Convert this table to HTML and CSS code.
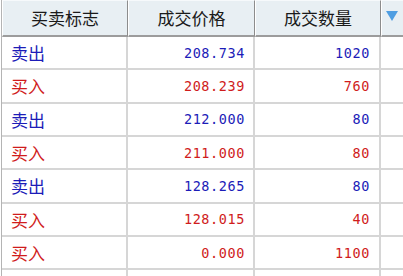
FILE: index.html
```html
<!DOCTYPE html>
<html lang="zh">
<head>
<meta charset="utf-8">
<link rel="stylesheet" href="styles.css">
</head>
<body>
<div class="grid">
  <div class="hd">买卖标志</div>
  <div class="hd">成交价格</div>
  <div class="hd">成交数量</div>
  <div class="hd hd-menu"><svg width="12" height="10" viewBox="0 0 12 10"><polygon points="0,0 12,0 6,10" fill="#4f9ee2"/></svg></div>

  <div class="c flag sell">卖出</div><div class="c num sell">208.734</div><div class="c num qty sell">1020</div><div class="c end"></div>
  <div class="c flag buy">买入</div><div class="c num buy">208.239</div><div class="c num qty buy">760</div><div class="c end"></div>
  <div class="c flag sell">卖出</div><div class="c num sell">212.000</div><div class="c num qty sell">80</div><div class="c end"></div>
  <div class="c flag buy">买入</div><div class="c num buy">211.000</div><div class="c num qty buy">80</div><div class="c end"></div>
  <div class="c flag sell">卖出</div><div class="c num sell">128.265</div><div class="c num qty sell">80</div><div class="c end"></div>
  <div class="c flag buy">买入</div><div class="c num buy">128.015</div><div class="c num qty buy">40</div><div class="c end"></div>
  <div class="c flag buy">买入</div><div class="c num buy">0.000</div><div class="c num qty buy">1100</div><div class="c end"></div>

  <div class="c tail"></div><div class="c tail"></div><div class="c tail"></div><div class="c tail end"></div>
</div>
</body>
</html>
```
FILE: styles.css
```css
html, body {
  margin: 0;
  padding: 0;
  background: #ffffff;
}
body {
  width: 403px;
  height: 276px;
  overflow: hidden;
  font-family: "Noto Sans CJK SC", "Noto Sans", sans-serif;
}
.grid {
  box-sizing: border-box;
  height: 276px;
  display: grid;
  grid-template-columns: 126px 127px 126px 1fr;
  grid-template-rows: 37px repeat(7, 33.33px) 1fr;
  margin-left: 1px;
  border-left: 1px solid #b4b4b4;
}
.hd {
  box-sizing: border-box;
  background: #e8eff3;
  border-top: 1px solid #f6f9fb;
  border-left: 1px solid #ffffff;
  border-right: 1px solid #8c8c8c;
  border-bottom: 2px solid #9c9c9c;
  display: flex;
  align-items: center;
  justify-content: center;
  font-size: 17px;
  color: #1a1a1a;
  padding-bottom: 1px;
}
.hd-menu {
  justify-content: flex-start;
  padding-left: 4px;
  border-right: none;
  padding-bottom: 4px;
}
.c {
  box-sizing: border-box;
  border-right: 2px solid #d6d6d6;
  border-bottom: 2px solid #d6d6d6;
  display: flex;
  align-items: center;
}
.c.end {
  border-right: none;
}
.c.tail {
  border-bottom: none;
}
.flag {
  font-size: 17px;
  padding-left: 9px;
}
.num {
  justify-content: flex-end;
  font-family: "DejaVu Sans Mono", "Liberation Mono", monospace;
  font-size: 13.5px;
  letter-spacing: 0.6px;
  padding-right: 8px;
}
.qty {
  padding-right: 9px;
}
.sell { color: #1c1cb8; }
.buy { color: #d01c1c; }
```
